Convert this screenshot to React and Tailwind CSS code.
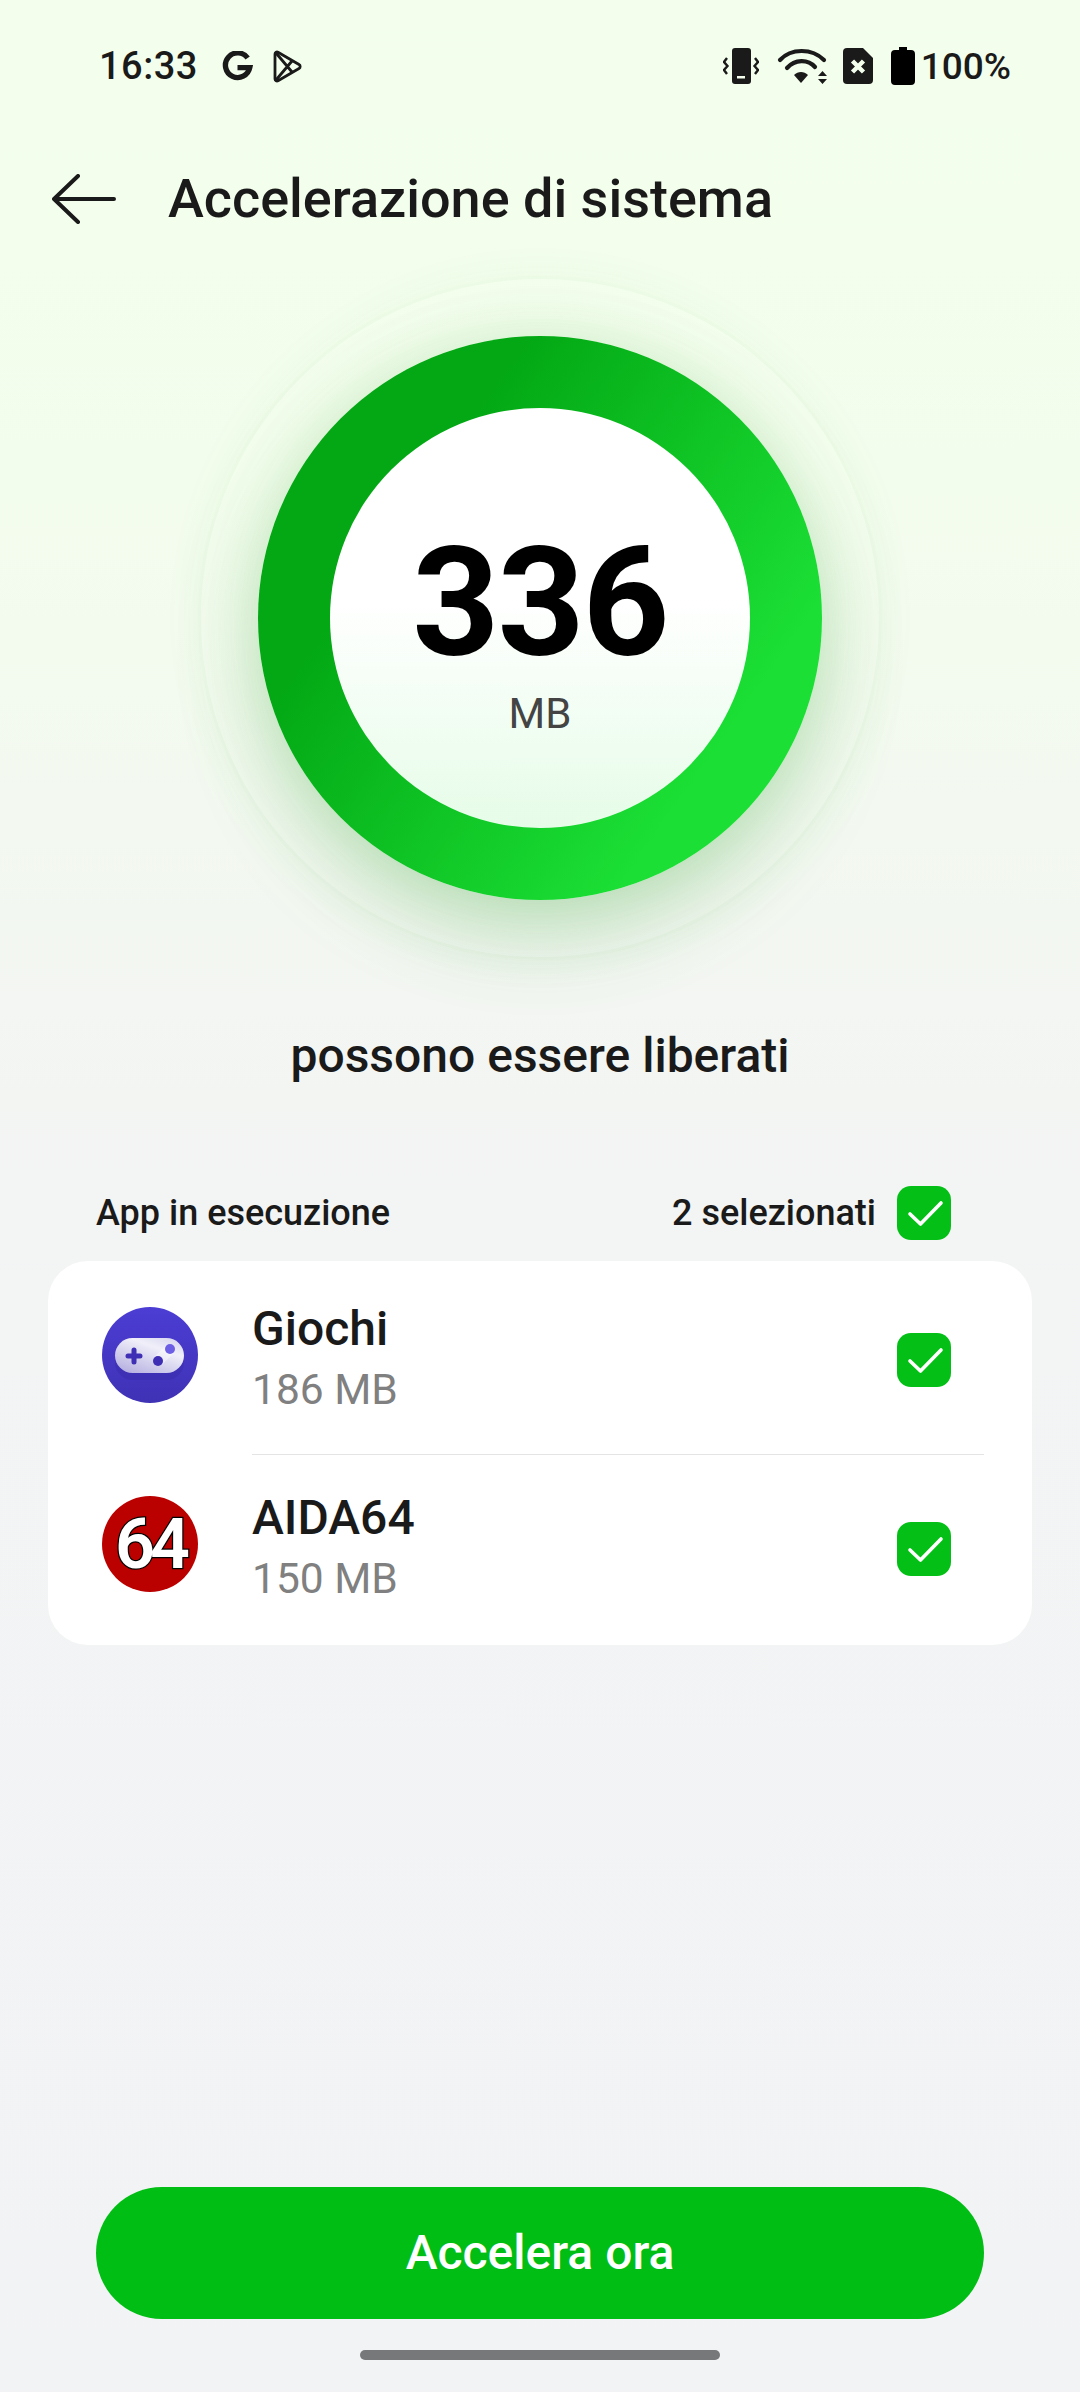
import React from 'react';

function Check({ className = '' }) {
  return (
    <div className={`h-[54px] w-[54px] shrink-0 rounded-[14px] bg-[#04bf16] ${className}`}>
      <svg width="54" height="54" viewBox="0 0 54 54" fill="none" stroke="white" strokeWidth="3.6" strokeLinecap="round" strokeLinejoin="round">
        <path d="M13 28 L23.500 38 L44 17" />
      </svg>
    </div>
  );
}

function GamesIcon() {
  return (
    <svg width="96" height="96" viewBox="0 0 96 96" className="block">
      <defs>
        <linearGradient id="gbg" x1="0" y1="0" x2="0" y2="1">
          <stop offset="0" stopColor="#4c3dd4" />
          <stop offset="1" stopColor="#3f32b5" />
        </linearGradient>
        <linearGradient id="gpad" x1="0.15" y1="1" x2="0.85" y2="0">
          <stop offset="0" stopColor="#b4afe0" />
          <stop offset="0.7" stopColor="#f0eff9" />
          <stop offset="1" stopColor="#d8d6ef" />
        </linearGradient>
      </defs>
      <circle cx="48" cy="48" r="48" fill="url(#gbg)" />
      <rect x="13" y="38" width="69" height="35" rx="17.500" fill="#2f2596" opacity="0.25" />
      <rect x="13" y="31" width="69" height="35" rx="17.500" fill="url(#gpad)" />
      <path d="M56 54L68 42" stroke="#ffffff" strokeWidth="11" opacity="0.4" />
      <path d="M32 43v12M26 49h12" stroke="#3f2fb5" strokeWidth="5" strokeLinecap="round" />
      <circle cx="56" cy="54" r="5" fill="#3f2fb5" />
      <circle cx="68" cy="42" r="5" fill="#6c5fe6" />
    </svg>
  );
}

function AidaIcon() {
  return (
    <div className="flex h-[96px] w-[96px] items-center justify-center overflow-hidden rounded-full bg-[#bb0000]">
      <span className="text-[70px] font-semibold leading-none tracking-[-5px] text-white [-webkit-text-stroke:2.500px_#000] [paint-order:stroke_fill]">64</span>
    </div>
  );
}

function AppRow({ icon, name, size, rowClass, checkClass }) {
  return (
    <div className={`flex items-center pl-[54px] pr-[81px] ${rowClass}`}>
      <div className="w-[96px] shrink-0">{icon}</div>
      <div className="ml-[54px] flex-1 pt-[5px]">
        <div className="text-[48px] font-medium leading-[54px] text-[#1a1a1a]">{name}</div>
        <div className="mt-[11px] text-[42.500px] leading-[46px] text-[#808080]">{size}</div>
      </div>
      <Check className={checkClass} />
    </div>
  );
}

export default function App() {
  return (
    <div className="flex h-[2392px] w-[1080px] flex-col overflow-hidden bg-[linear-gradient(180deg,#f3ffec_0%,#f3fded_20%,#f3f7f1_38%,#f3f4f4_50%,#f2f3f5_100%)] font-['Roboto',sans-serif] text-[#1a1a1a]">
      {/* status bar */}
      <div className="flex h-[132px] items-center justify-between pl-[99px] pr-[69px]">
        <div className="flex items-center">
          <span className="text-[38px] font-medium leading-none tracking-[0.5px]">16:33</span>
          <svg className="ml-[24px]" width="31" height="30" viewBox="0 0 29 28" fill="none">
            <path d="M24 6.500A11.500 11.500 0 1 0 26 15.500H14.500" stroke="#1a1a1a" strokeWidth="5" />
          </svg>
          <svg className="ml-[20px]" width="29" height="33" viewBox="0 0 29 33" fill="none" stroke="#1a1a1a" strokeWidth="2.800" strokeLinejoin="round">
            <path d="M2 4a2 2 0 0 1 3-1.700L26 14.500a2.300 2.300 0 0 1 0 4L5 30.700A2 2 0 0 1 2 29z" />
            <path d="M3 3L19 22M3 30L19 11" />
          </svg>
        </div>
        <div className="flex items-center">
          <svg width="36" height="36" viewBox="0 0 36 36" fill="none">
            <rect x="9" y="0" width="19" height="36" rx="3" fill="#1a1a1a" />
            <rect x="14" y="28" width="8" height="2.500" fill="#f3ffec" />
            <path d="M4 10L1 14l3.500 4L1 22l3 4M32 10l3 4-3.500 4 3.500 4-3 4" stroke="#1a1a1a" strokeWidth="2.400" />
          </svg>
          <svg className="ml-[18px]" width="50" height="36" viewBox="0 0 50 36" fill="none" stroke="#1a1a1a" strokeWidth="4.200" strokeLinecap="round">
            <path d="M3 12C14 0 35 0 47 12" />
            <path d="M10 20C18 11 31 11 38 19" />
            <path d="M17 27l7 8 7-8C27 23 21 23 17 27z" fill="#1a1a1a" stroke="none" />
            <path d="M41 28l4.500-5 4.500 5zM41 31h9l-4.500 5z" fill="#1a1a1a" stroke="none" />
          </svg>
          <svg className="ml-[16px]" width="30" height="36" viewBox="0 0 30 36">
            <path d="M4 0H20L30 10V32a4 4 0 0 1-4 4H4a4 4 0 0 1-4-4V4a4 4 0 0 1 4-4z" fill="#1a1a1a" />
            <path d="M9.500 13l11 11M20.500 13L9.500 24" stroke="#f3ffec" strokeWidth="4.500" />
          </svg>
          <svg className="ml-[18px]" width="24" height="38" viewBox="0 0 24 38">
            <path d="M8 0h8v3h4a4 4 0 0 1 4 4v27a4 4 0 0 1-4 4H4a4 4 0 0 1-4-4V7a4 4 0 0 1 4-4h4z" fill="#000" />
          </svg>
          <span className="ml-[6px] text-[37px] font-medium leading-none">100%</span>
        </div>
      </div>

      {/* header */}
      <div className="flex h-[132px] items-center pl-[52px] pt-[1px]">
        <svg width="64" height="50" viewBox="0 0 64 50" fill="none" stroke="#1a1a1a" strokeWidth="4" strokeLinecap="round" strokeLinejoin="round">
          <path d="M62 25H2M26 2L2 25l24 23" />
        </svg>
        <span className="ml-[52px] text-[54px] font-medium leading-none">Accelerazione di sistema</span>
      </div>

      {/* meter */}
      <div className="mt-[12px] flex justify-center">
        <div className="flex h-[684px] w-[684px] items-center justify-center rounded-full border-[3px] border-[rgba(60,170,60,0.04)] shadow-[0_0_40px_rgba(60,170,60,0.05)]">
          <div className="flex h-[564px] w-[564px] items-center justify-center rounded-full bg-[linear-gradient(125deg,#03a814_28%,#1bdf35_78%)] shadow-[0_34px_80px_rgba(60,170,60,0.28),0_0_60px_rgba(60,170,60,0.10)]">
            <div className="flex h-[420px] w-[420px] flex-col items-center rounded-full bg-[linear-gradient(180deg,#ffffff_45%,#e6fce8_100%)]">
              <span className="mt-[139px] text-[152px] font-bold leading-[112px] tracking-[-2px] text-black">336</span>
              <span className="mt-[32px] text-[42px] leading-[46px] text-[#444]">MB</span>
            </div>
          </div>
        </div>
      </div>

      <div className="mt-[69px] text-center text-[48px] font-medium leading-[54px]">possono essere liberati</div>

      {/* list header */}
      <div className="mt-[103px] flex h-[54px] items-center pl-[96px] pr-[129px]">
        <span className="flex-1 text-[36px] font-medium">App in esecuzione</span>
        <span className="mr-[21px] text-[36px] font-medium">2 selezionati</span>
        <Check />
      </div>

      <div className="mx-[48px] mt-[21px] rounded-[40px] bg-white pb-[12px]">
        <AppRow icon={<GamesIcon />} name="Giochi" size="186 MB" rowClass="h-[193px] pb-[5px]" checkClass="mt-[9px]" />
        <div className="ml-[204px] mr-[48px] h-px bg-[#e4e4e4]" />
        <AppRow icon={<AidaIcon />} name="AIDA64" size="150 MB" rowClass="h-[178px]" checkClass="mt-[9px]" />
      </div>

      <div className="mx-[96px] mt-auto mb-[31px] flex h-[132px] items-center justify-center rounded-full bg-[#00be13] text-[48px] font-medium text-white">Accelera ora</div>
      <div className="mx-auto mb-[32px] h-[10px] w-[360px] rounded-full bg-[#77787a]" />
    </div>
  );
}
